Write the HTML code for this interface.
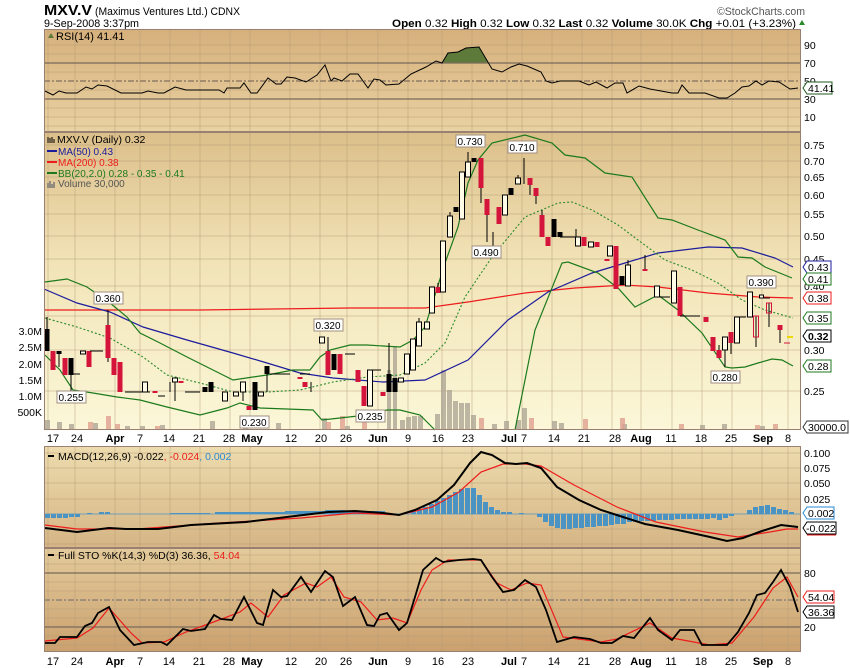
<!DOCTYPE html>
<html><head><meta charset="utf-8"><style>
html,body{margin:0;padding:0;background:#fff;}
svg{display:block;font-family:"Liberation Sans",sans-serif;}
</style></head><body>
<svg width="850" height="668" viewBox="0 0 850 668" xmlns="http://www.w3.org/2000/svg">
<defs>
<linearGradient id="gR" x1="0" y1="0" x2="0" y2="1"><stop offset="0" stop-color="#d6b07c"/><stop offset="1" stop-color="#e9d2a2"/></linearGradient>
<linearGradient id="gM" x1="0" y1="0" x2="0" y2="1"><stop offset="0" stop-color="#dcbf8a"/><stop offset="0.45" stop-color="#f2e4b8"/><stop offset="1" stop-color="#fbf7d8"/></linearGradient>
<linearGradient id="gC" x1="0" y1="0" x2="0" y2="1"><stop offset="0" stop-color="#eddcae"/><stop offset="1" stop-color="#d5b585"/></linearGradient>
<linearGradient id="gS" x1="0" y1="0" x2="0" y2="1"><stop offset="0" stop-color="#e4cb9b"/><stop offset="1" stop-color="#caa06e"/></linearGradient>
</defs>
<rect width="850" height="668" fill="#fff"/>
<!-- header -->
<text x="44" y="15" font-size="15" font-weight="bold" textLength="48" lengthAdjust="spacingAndGlyphs">MXV.V</text>
<text x="95" y="15" font-size="11" textLength="145" lengthAdjust="spacingAndGlyphs">(Maximus Ventures Ltd.)  CDNX</text>
<text x="44" y="27" font-size="11" textLength="95" lengthAdjust="spacingAndGlyphs">9-Sep-2008 3:37pm</text>
<text x="717" y="15" font-size="11" fill="#555" textLength="88" lengthAdjust="spacingAndGlyphs">©StockCharts.com</text>
<text x="392" y="27" font-size="11" textLength="404" lengthAdjust="spacingAndGlyphs"><tspan font-weight="bold">Open</tspan> 0.32  <tspan font-weight="bold">High</tspan> 0.32  <tspan font-weight="bold">Low</tspan> 0.32  <tspan font-weight="bold">Last</tspan> 0.32  <tspan font-weight="bold">Volume</tspan> 30.0K  <tspan font-weight="bold">Chg</tspan> +0.01 (+3.23%)</text>
<path d="M799 25 L802 20 L805 25Z" fill="#2a8a2a"/>

<!-- panels -->
<rect x="44" y="29" width="757" height="103" fill="url(#gR)"/>
<rect x="44" y="132" width="757" height="298" fill="url(#gM)"/>
<rect x="44" y="446" width="757" height="102" fill="url(#gC)"/>
<rect x="44" y="548" width="757" height="104" fill="url(#gS)"/>

<!-- vertical gridlines -->
<g stroke="#b49a74" stroke-opacity="0.45" stroke-width="1">
<path d="M48 29V430M75 29V430M115 29V430M140 29V430M170 29V430M200 29V430M230 29V430M250 29V430M290 29V430M320 29V430M347 29V430M378 29V430M408 29V430M442 29V430M472 29V430M507 29V430M522 29V430M552 29V430M582 29V430M612 29V430M641 29V430M672 29V430M702 29V430M732 29V430M762 29V430M788 29V430"/>
<path d="M48 446V652M75 446V652M115 446V652M140 446V652M170 446V652M200 446V652M230 446V652M250 446V652M290 446V652M320 446V652M347 446V652M378 446V652M408 446V652M442 446V652M472 446V652M507 446V652M522 446V652M552 446V652M582 446V652M612 446V652M641 446V652M672 446V652M702 446V652M732 446V652M762 446V652M788 446V652"/>
<path d="M44 45H801M44 54H801M44 72H801M44 90H801M44 108H801M44 117H801M44 126H801"/>
<path d="M44 145H801M44 161H801M44 177H801M44 195H801M44 214H801M44 236H801M44 259H801M44 286H801M44 316H801M44 350H801M44 391H801"/>
<path d="M44 453H801M44 468H801M44 483H801M44 499H801M44 529H801M44 544H801"/>
<path d="M44 555H801M44 564H801M44 582H801M44 591H801M44 609H801M44 618H801M44 636H801M44 645H801"/>
</g>

<!-- RSI -->
<path d="M442 63 L448 53 L458 52 L466 48 L479 47 L489 63Z" fill="#5e7a3a"/>
<g stroke="#7a6a5a" stroke-width="1.2"><path d="M44 63H801M44 99H801"/></g>
<path d="M44 81H801" stroke="#6a5a50" stroke-dasharray="6,2,2,2"/>
<polyline fill="none" stroke="#000" stroke-width="1" points="45,91 53,95 59,91 66,93 77,93 86,87 92,89 98,85 107,86 121,93 142,93 148,91 158,93 164,93 175,87 186,90 219,90 224,93 227,88 240,88 244,83 251,93 257,93 268,78 276,84 281,84 287,77 295,78 306,82 317,75 325,65 331,81 334,78 342,81 350,74 358,74 368,88 374,79 380,80 386,85 399,84 411,74 426,67 436,61 442,63 448,53 458,52 466,48 479,47 492,69 502,72 511,67 519,64 527,66 541,72 546,81 552,83 560,81 579,81 589,85 596,82 607,88 615,83 623,83 627,93 639,86 650,89 661,91 672,93 678,93 682,85 689,93 705,93 719,98 727,98 735,93 742,87 749,86 756,81 762,85 769,81 779,82 790,89 798,88"/>
<path d="M48 38 L51 33 L54 38Z" fill="#5e7a3a"/>
<text x="56" y="40" font-size="11">RSI(14) 41.41</text>

<!-- main: volume bars -->
<g fill="#a8a090" fill-opacity="0.75">
<rect x="45" y="420" width="5" height="10"/><rect x="57" y="422" width="5" height="8"/><rect x="69" y="424" width="5" height="6"/><rect x="93" y="423" width="5" height="7"/><rect x="125" y="426" width="5" height="4"/><rect x="140" y="426" width="5" height="4"/><rect x="160" y="425" width="5" height="5"/><rect x="210" y="421" width="5" height="9"/><rect x="243" y="424" width="5" height="6"/><rect x="276" y="423" width="5" height="7"/><rect x="322" y="418" width="5" height="12"/><rect x="345" y="426" width="5" height="4"/>
<rect x="387" y="370" width="4" height="60"/><rect x="393" y="347" width="4" height="83"/><rect x="400" y="420" width="5" height="10"/><rect x="406" y="417" width="5" height="13"/><rect x="412" y="416" width="5" height="14"/><rect x="418" y="416" width="5" height="14"/>
<rect x="435" y="414" width="5" height="16"/><rect x="441" y="370" width="5" height="60"/><rect x="447" y="390" width="5" height="40"/><rect x="453" y="401" width="5" height="29"/><rect x="459" y="403" width="5" height="27"/><rect x="465" y="403" width="5" height="27"/><rect x="471" y="415" width="5" height="15"/><rect x="492" y="424" width="5" height="6"/><rect x="504" y="421" width="5" height="9"/><rect x="516" y="420" width="5" height="10"/><rect x="522" y="408" width="5" height="22"/><rect x="552" y="421" width="5" height="9"/><rect x="559" y="423" width="5" height="7"/><rect x="622" y="424" width="5" height="6"/><rect x="700" y="425" width="5" height="5"/><rect x="722" y="424" width="5" height="6"/><rect x="760" y="426" width="5" height="4"/>
</g>
<g fill="#e0a090" fill-opacity="0.8">
<rect x="88" y="422" width="5" height="8"/><rect x="106" y="416" width="5" height="14"/><rect x="115" y="424" width="5" height="6"/><rect x="155" y="426" width="5" height="4"/><rect x="326" y="422" width="5" height="8"/><rect x="340" y="416" width="5" height="14"/><rect x="362" y="422" width="5" height="8"/><rect x="479" y="418" width="5" height="12"/><rect x="529" y="418" width="5" height="12"/><rect x="583" y="419" width="5" height="11"/><rect x="620" y="418" width="5" height="12"/><rect x="679" y="424" width="5" height="6"/><rect x="755" y="425" width="5" height="5"/><rect x="773" y="424" width="5" height="6"/>
</g>

<!-- indicators -->
<polyline fill="none" stroke="#ee1c1c" stroke-width="1.2" points="44,310 200,310 350,308 425,308 468,302 525,293 575,288 625,285 658,287 708,293 758,297 793,298"/>
<polyline fill="none" stroke="#1c1c9c" stroke-width="1.2" points="44,289 77,303 110,312 143,327 187,340 233,353 267,363 300,373 333,378 383,382 425,380 468,360 508,320 548,292 592,273 625,263 658,253 708,247 742,248 775,258 793,267"/>
<polyline fill="none" stroke="#1c7a1c" stroke-width="1.2" points="45,282 67,279 87,287 110,303 127,317 140,333 160,343 187,357 213,370 233,380 253,377 267,375 293,370 310,370 320,357 330,350 350,345 367,345 383,346 400,347 413,340 425,327 445,263 458,227 468,183 478,160 492,143 525,135 552,143 565,155 585,158 605,173 632,177 658,218 672,220 698,230 725,240 738,257 752,258 765,267 792,278"/>
<polyline fill="none" stroke="#1c7a1c" stroke-width="1.2" points="45,355 60,370 73,390 93,393 117,397 140,400 167,407 200,415 227,408 240,403 260,408 313,410 322,420 367,415 387,410 400,410 420,415 425,420 435,430"/>
<polyline fill="none" stroke="#1c7a1c" stroke-width="1.2" points="515,430 535,330 562,263 568,262 598,273 618,288 635,307 658,295 678,310 702,333 725,367 732,368 745,367 758,363 772,359 782,360 793,366"/>
<polyline fill="none" stroke="#2a8a2a" stroke-width="1.1" stroke-dasharray="2,2" points="45,318 77,327 110,338 143,357 167,375 200,383 233,392 267,392 300,390 333,382 367,377 400,375 425,363 445,343 465,297 492,257 525,217 558,203 572,202 592,210 618,225 638,240 665,260 692,270 718,283 742,300 765,310 793,318"/>

<!-- candles: wicks -->
<g stroke="#000" stroke-width="1">
<path d="M47 317V351M59 351V367M71 358V393M108 310V362M175 378V401M170 382V392M243 382V401M255 382V410M267 366V392M311 382V392M328 337V375M389 343V392M407 354V374M419 318V346M438 283V293M450 212V237M468 152V177M481 158V203M487 199V242M493 232V255M518 175V184M524 158V184M530 178V195M536 188V204M542 210V237M576 229V237M628 260V286M645 255V270M719 345V358M725 337V367M731 332V354M756 316V347M769 303V327M780 325V343"/>
</g>
<!-- red bodies -->
<g fill="#d4143a">
<rect x="50.5" y="351" width="5" height="19"/><rect x="62.5" y="358" width="5" height="17"/><rect x="86.5" y="351" width="5" height="16"/><rect x="105.5" y="325" width="5" height="33"/><rect x="111.5" y="358" width="5" height="17"/><rect x="117.5" y="362" width="5" height="30"/><rect x="152.5" y="391" width="5" height="2"/><rect x="178.5" y="381" width="5" height="2"/><rect x="246.5" y="406" width="5" height="4"/><rect x="297.5" y="377" width="5" height="2"/><rect x="302.5" y="382" width="5" height="5"/><rect x="325.5" y="351" width="5" height="24"/><rect x="337.5" y="354" width="5" height="20"/><rect x="355.5" y="370" width="5" height="12"/><rect x="361.5" y="386" width="5" height="20"/><rect x="380.5" y="392" width="5" height="4"/>
<rect x="435.5" y="287" width="5" height="6"/><rect x="478.5" y="158" width="5" height="30"/><rect x="484.5" y="199" width="5" height="16"/><rect x="496.5" y="207" width="5" height="17"/><rect x="527.5" y="178" width="5" height="7"/><rect x="533.5" y="188" width="5" height="8"/><rect x="539.5" y="215" width="5" height="22"/><rect x="545.5" y="237" width="5" height="9"/><rect x="581.5" y="237" width="5" height="9"/><rect x="594.5" y="242" width="5" height="5"/><rect x="604.5" y="259" width="5" height="2"/><rect x="613.5" y="246" width="5" height="43"/><rect x="642.5" y="269" width="5" height="2"/><rect x="677.5" y="287" width="5" height="29"/><rect x="703.5" y="317" width="5" height="5"/><rect x="710.5" y="337" width="5" height="14"/><rect x="716.5" y="350" width="5" height="8"/><rect x="728.5" y="332" width="5" height="11"/><rect x="777.5" y="325" width="5" height="5"/>
</g>
<g fill="none" stroke="#d4143a" stroke-width="1"><rect x="753.5" y="316" width="5" height="21"/><rect x="766.5" y="303" width="5" height="10"/><path d="M784 343H790"/></g>
<!-- black bodies -->
<g fill="#000">
<rect x="44.5" y="329" width="5" height="22"/><rect x="56.5" y="351" width="5" height="3"/><rect x="68.5" y="358" width="5" height="17"/><rect x="202.5" y="387" width="5" height="5"/><rect x="208.5" y="382" width="5" height="10"/><rect x="252.5" y="382" width="5" height="28"/><rect x="264.5" y="366" width="5" height="8"/><rect x="331.5" y="354" width="5" height="16"/><rect x="386.5" y="374" width="5" height="18"/><rect x="392.5" y="378" width="5" height="14"/>
<rect x="453.5" y="207" width="5" height="5"/><rect x="471.5" y="158" width="5" height="4"/><rect x="508.5" y="188" width="5" height="7"/><rect x="551.5" y="219" width="5" height="18"/><rect x="557.5" y="232" width="5" height="5"/><rect x="619.5" y="276" width="5" height="9"/>
</g>
<!-- white bodies -->
<g fill="#fffbe6" stroke="#000" stroke-width="1">
<rect x="80.5" y="351" width="5" height="3"/><rect x="142.5" y="382" width="5" height="10"/><rect x="172.5" y="378" width="5" height="4"/><rect x="222.5" y="392" width="5" height="9"/><rect x="233.5" y="392" width="5" height="4"/><rect x="240.5" y="382" width="5" height="10"/><rect x="258.5" y="392" width="5" height="4"/><rect x="319.5" y="337" width="5" height="6"/><rect x="367.5" y="370" width="5" height="36"/><rect x="398.5" y="378" width="5" height="4"/><rect x="404.5" y="354" width="5" height="20"/><rect x="410.5" y="339" width="5" height="31"/><rect x="416.5" y="322" width="5" height="24"/><rect x="424.5" y="322" width="5" height="7"/><rect x="429.5" y="287" width="5" height="26"/>
<rect x="440.5" y="241" width="5" height="51"/><rect x="447.5" y="216" width="5" height="21"/><rect x="459.5" y="172" width="5" height="47"/><rect x="465.5" y="162" width="5" height="15"/><rect x="502.5" y="195" width="5" height="20"/><rect x="515.5" y="178" width="5" height="6"/><rect x="575.5" y="237" width="5" height="9"/><rect x="588.5" y="242" width="5" height="5"/><rect x="607.5" y="246" width="5" height="10"/><rect x="625.5" y="265" width="5" height="21"/><rect x="654.5" y="286" width="5" height="11"/><rect x="671.5" y="271" width="5" height="32"/><rect x="722.5" y="337" width="5" height="13"/><rect x="734.5" y="317" width="5" height="26"/><rect x="747.5" y="292" width="5" height="25"/><rect x="759.5" y="295" width="4" height="3"/>
</g>
<g stroke="#000" stroke-width="1"><path d="M73 374H80M90 351H103M125 392H150M158 396H165M185 392H200M270 374H290M300 374H310M345 354H355M372 370H381M560 237H575M660 297H670M680 316H700M740 317H746M764 298H770"/></g>
<path d="M787 337H793" stroke="#e8d800" stroke-width="2"/>
<!-- price labels in chart -->
<g font-size="10" text-anchor="middle">
<g fill="#fff" stroke="#a09080" stroke-width="1">
<rect x="94" y="292" width="29" height="12"/><rect x="57" y="391" width="29" height="12"/><rect x="240" y="416" width="29" height="12"/><rect x="314" y="319" width="29" height="12"/><rect x="356" y="410" width="29" height="12"/><rect x="456" y="135" width="29" height="12"/><rect x="472" y="246" width="29" height="12"/><rect x="508" y="141" width="29" height="12"/><rect x="747" y="276" width="29" height="12"/><rect x="711" y="371" width="29" height="12"/>
</g>
<text x="108" y="302">0.360</text><text x="71" y="401">0.255</text><text x="254" y="426">0.230</text><text x="328" y="329">0.320</text><text x="370" y="420">0.235</text><text x="470" y="145">0.730</text><text x="486" y="256">0.490</text><text x="522" y="151">0.710</text><text x="761" y="286">0.390</text><text x="725" y="381">0.280</text>
</g>
<!-- legend -->
<g font-size="10">
<path d="M48 137v6M50 138v5M52 137v6M54 139v4" stroke="#000"/>
<text x="57" y="143" font-size="10.5">MXV.V (Daily) 0.32</text>
<path d="M47 151H57" stroke="#1c1c9c" stroke-width="2"/><text x="58" y="155" fill="#1c1c9c">MA(50) 0.43</text>
<path d="M47 162H57" stroke="#ee1c1c" stroke-width="2"/><text x="58" y="166" fill="#ee1c1c">MA(200) 0.38</text>
<path d="M47 173H57" stroke="#1c7a1c" stroke-width="2"/><text x="58" y="177" fill="#1c7a1c">BB(20,2.0) 0.28 - 0.35 - 0.41</text>
<path d="M48 188v-5M50 188v-7M52 188v-4M54 188v-6" stroke="#777" stroke-width="1.5"/><text x="58" y="187" fill="#555">Volume 30,000</text>
</g>
<g font-size="10.5" text-anchor="end">
<text x="42" y="335">3.0M</text><text x="42" y="351">2.5M</text><text x="42" y="368">2.0M</text><text x="42" y="384">1.5M</text><text x="42" y="400">1.0M</text><text x="42" y="416">500K</text>
</g>

<!-- MACD -->
<g fill="#4b93c3">
<rect x="45" y="514" width="5" height="4"/><rect x="51" y="514" width="5" height="4"/><rect x="57" y="514" width="5" height="4"/><rect x="63" y="514" width="5" height="4"/><rect x="69" y="514" width="5" height="3"/><rect x="75" y="514" width="5" height="3"/>
<rect x="87" y="513" width="5" height="1"/><rect x="99" y="512" width="5" height="2"/><rect x="105" y="512" width="5" height="2"/><rect x="170" y="513" width="40" height="1"/><rect x="215" y="512" width="70" height="2"/><rect x="285" y="511" width="40" height="3"/><rect x="325" y="510" width="20" height="4"/><rect x="345" y="511" width="40" height="3"/>
<rect x="411" y="511" width="5" height="3"/><rect x="417" y="509" width="5" height="5"/><rect x="423" y="507" width="5" height="7"/><rect x="429" y="504" width="5" height="10"/><rect x="435" y="501" width="5" height="13"/><rect x="441" y="498" width="5" height="16"/><rect x="447" y="495" width="5" height="19"/><rect x="453" y="492" width="5" height="22"/><rect x="459" y="489" width="5" height="25"/><rect x="465" y="488" width="5" height="26"/><rect x="471" y="488" width="5" height="26"/><rect x="477" y="495" width="5" height="19"/><rect x="483" y="502" width="5" height="12"/><rect x="489" y="507" width="5" height="7"/><rect x="495" y="510" width="5" height="4"/><rect x="501" y="512" width="5" height="2"/><rect x="507" y="512" width="5" height="2"/><rect x="519" y="513" width="5" height="1"/>
<rect x="537" y="514" width="5" height="3"/><rect x="543" y="514" width="5" height="8"/><rect x="549" y="514" width="5" height="12"/><rect x="555" y="514" width="5" height="14"/><rect x="561" y="514" width="5" height="15"/><rect x="567" y="514" width="5" height="15"/><rect x="573" y="514" width="5" height="14"/><rect x="579" y="514" width="5" height="14"/><rect x="585" y="514" width="5" height="13"/><rect x="591" y="514" width="5" height="13"/><rect x="597" y="514" width="5" height="12"/><rect x="603" y="514" width="5" height="12"/><rect x="609" y="514" width="5" height="11"/><rect x="615" y="514" width="5" height="10"/><rect x="621" y="514" width="5" height="10"/><rect x="627" y="514" width="5" height="8"/><rect x="633" y="514" width="5" height="8"/><rect x="639" y="514" width="5" height="7"/><rect x="645" y="514" width="5" height="7"/><rect x="651" y="514" width="5" height="7"/><rect x="657" y="514" width="5" height="6"/><rect x="663" y="514" width="5" height="6"/><rect x="669" y="514" width="5" height="6"/><rect x="675" y="514" width="5" height="5"/><rect x="681" y="514" width="5" height="5"/><rect x="687" y="514" width="5" height="5"/><rect x="693" y="514" width="5" height="5"/><rect x="699" y="514" width="5" height="5"/><rect x="705" y="514" width="5" height="5"/><rect x="711" y="514" width="5" height="4"/><rect x="717" y="514" width="5" height="6"/><rect x="723" y="514" width="5" height="4"/><rect x="729" y="514" width="5" height="2"/>
<rect x="747" y="510" width="5" height="4"/><rect x="753" y="507" width="5" height="7"/><rect x="759" y="506" width="5" height="8"/><rect x="765" y="505" width="5" height="9"/><rect x="771" y="507" width="5" height="7"/><rect x="777" y="509" width="5" height="5"/><rect x="783" y="510" width="5" height="4"/><rect x="789" y="512" width="5" height="2"/>
</g>
<path d="M44 514H801" stroke="#4b93c3" stroke-width="0.8"/>
<polyline fill="none" stroke="#ee1c1c" stroke-width="1.2" points="45,525 77,529 137,529 219,523 301,518 355,513 399,515 432,507 459,492 481,472 503,464 525,464 541,466 574,485 617,507 656,522 705,532 738,537 770,532 787,529 798,529"/>
<polyline fill="none" stroke="#000" stroke-width="2" points="45,528 77,532 109,528 126,529 158,529 191,525 246,522 295,516 328,512 355,511 383,513 399,515 415,510 437,500 454,485 470,463 481,452 492,455 505,463 516,464 527,463 541,468 557,487 579,500 601,510 623,517 645,524 678,530 710,537 727,541 743,538 762,531 781,525 798,527"/>
<path d="M48 456H54" stroke="#000" stroke-width="2"/>
<text x="58" y="460" font-size="10.5">MACD(12,26,9) -0.022<tspan fill="#ee1c1c">, -0.024</tspan><tspan fill="#2a8ad0">, 0.002</tspan></text>

<!-- STO -->
<g stroke="#7a6a5a" stroke-width="1.2"><path d="M44 573H801M44 627H801"/></g>
<path d="M44 600H801" stroke="#6a6a70" stroke-dasharray="6,2,2,2"/>
<polyline fill="none" stroke="#ee1c1c" stroke-width="1.2" points="45,641 77,638 93,628 109,608 131,633 142,643 164,642 186,632 219,620 240,612 251,603 268,617 284,595 306,583 317,587 331,577 344,597 361,602 377,620 393,618 407,623 421,590 432,570 448,560 481,560 497,583 511,590 527,583 541,585 563,637 601,642 617,639 650,623 672,638 710,645 732,643 754,617 773,588 787,577 798,597"/>
<polyline fill="none" stroke="#000" stroke-width="1.8" points="45,643 55,643 60,637 68,637 77,637 85,626 92,623 98,613 109,607 120,630 134,645 148,642 161,642 167,645 183,629 191,631 205,629 214,615 221,619 232,620 244,597 257,623 263,625 273,590 281,597 287,596 301,577 311,592 325,571 333,577 343,606 355,597 367,625 374,626 380,615 387,613 399,630 407,623 415,597 423,570 436,558 443,562 459,560 473,559 481,560 492,577 503,592 514,590 525,580 536,587 546,610 557,642 574,637 590,639 601,643 612,643 623,636 634,638 642,628 650,618 658,630 672,640 680,630 694,630 702,645 727,645 738,632 749,613 757,595 765,593 773,582 781,570 790,587 798,612"/>
<path d="M48 555H54" stroke="#000" stroke-width="2"/>
<text x="58" y="559" font-size="10.5">Full STO %K(14,3) %D(3) 36.36, <tspan fill="#ee1c1c">54.04</tspan></text>

<!-- panel borders -->
<g fill="none" stroke="#9a8070" stroke-width="1">
<rect x="44.5" y="29.5" width="756" height="102"/><rect x="44.5" y="132.5" width="756" height="297"/><rect x="44.5" y="446.5" width="756" height="101"/><rect x="44.5" y="548.5" width="756" height="103"/>
</g>

<!-- right axis labels -->
<g font-size="10.5" fill="#000">
<text x="804" y="49">90</text><text x="804" y="67">70</text><text x="804" y="85">50</text><text x="804" y="103">30</text><text x="804" y="121">10</text>
<text x="804" y="149">0.75</text><text x="804" y="165">0.70</text><text x="804" y="181">0.65</text><text x="804" y="199">0.60</text><text x="804" y="218">0.55</text><text x="804" y="240">0.50</text><text x="804" y="263">0.45</text><text x="804" y="290">0.40</text><text x="804" y="354">0.30</text><text x="804" y="395">0.25</text>
<text x="804" y="457">0.100</text><text x="804" y="472">0.075</text><text x="804" y="487">0.050</text><text x="804" y="503">0.025</text>
<text x="804" y="577">80</text><text x="804" y="631">20</text>
</g>
<g font-size="10.5">
<g fill="#fff" stroke-width="1">
<path d="M803 88 l4 -6 h25 v12 h-25z" stroke="#1c5a1c"/>
<path d="M803 267 l4 -6 h24 v12 h-24z" stroke="#1c1c9c"/>
<path d="M803 279 l4 -6 h24 v12 h-24z" stroke="#1c7a1c"/>
<path d="M803 298 l4 -6 h24 v12 h-24z" stroke="#ee1c1c"/>
<path d="M803 318 l4 -6 h24 v12 h-24z" stroke="#1c7a1c"/>
<path d="M803 336 l4 -6 h24 v12 h-24z" stroke="#000"/>
<path d="M803 366 l4 -6 h24 v12 h-24z" stroke="#1c7a1c"/>
<path d="M803 427 l4 -6 h41 v12 h-41z" stroke="#333"/>
<path d="M803 513 l4 -6 h27 v12 h-27z" stroke="#2a8ad0"/>
<path d="M803 528 l4 -6 h29 v12 h-29z" stroke="#000"/>
<path d="M807 535 h29" stroke="#ee1c1c"/>
<path d="M803 597 l4 -6 h27 v12 h-27z" stroke="#ee1c1c"/>
<path d="M803 612 l4 -6 h27 v12 h-27z" stroke="#000"/>
</g>
<text x="808" y="92">41.41</text><text x="808" y="271">0.43</text><text x="808" y="283">0.41</text><text x="808" y="302">0.38</text><text x="808" y="322">0.35</text><text x="808" y="340" font-weight="bold">0.32</text><text x="808" y="370">0.28</text><text x="808" y="431">30000.0</text>
<text x="808" y="517">0.002</text><text x="806" y="532">-0.022</text><text x="808" y="601">54.04</text><text x="808" y="616">36.36</text>
</g>

<!-- date axes -->
<g font-size="11" text-anchor="middle">
<g transform="translate(0,442)">
<text x="53">17</text><text x="77">24</text><text x="115" font-weight="bold">Apr</text><text x="140">7</text><text x="169">14</text><text x="199">21</text><text x="229">28</text><text x="252" font-weight="bold">May</text><text x="291">12</text><text x="321">20</text><text x="346">26</text><text x="378" font-weight="bold">Jun</text><text x="408">9</text><text x="438">16</text><text x="468">23</text><text x="509" font-weight="bold">Jul</text><text x="524">7</text><text x="554">14</text><text x="584">21</text><text x="615">28</text><text x="641" font-weight="bold">Aug</text><text x="671">11</text><text x="701">18</text><text x="731">25</text><text x="763" font-weight="bold">Sep</text><text x="788">8</text>
</g>
<g transform="translate(0,665)">
<text x="53">17</text><text x="77">24</text><text x="115" font-weight="bold">Apr</text><text x="140">7</text><text x="169">14</text><text x="199">21</text><text x="229">28</text><text x="252" font-weight="bold">May</text><text x="291">12</text><text x="321">20</text><text x="346">26</text><text x="378" font-weight="bold">Jun</text><text x="408">9</text><text x="438">16</text><text x="468">23</text><text x="509" font-weight="bold">Jul</text><text x="524">7</text><text x="554">14</text><text x="584">21</text><text x="615">28</text><text x="641" font-weight="bold">Aug</text><text x="671">11</text><text x="701">18</text><text x="731">25</text><text x="763" font-weight="bold">Sep</text><text x="788">8</text>
</g>
</g>
</svg>
</body></html>
